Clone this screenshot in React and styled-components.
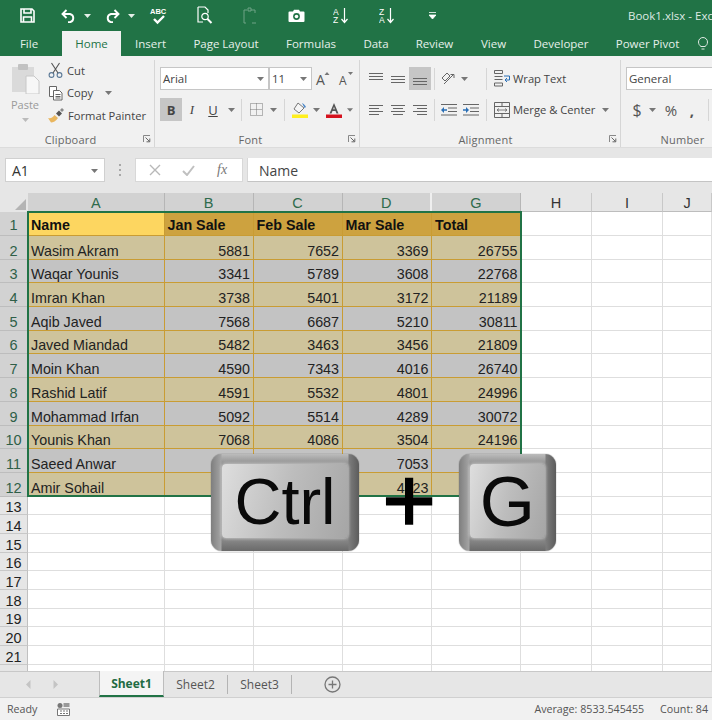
import React from "react";
import styled, { createGlobalStyle } from "styled-components";

const GlobalStyle = createGlobalStyle`
  html, body { margin: 0; padding: 0; overflow: hidden; background: #fff; }
  body { font-family: "Open Sans", "Noto Sans", sans-serif; }
  * { box-sizing: border-box; }
`;

const Page = styled.div`
  width: 712px;
  height: 720px;
  display: flex;
  flex-direction: column;
  overflow: hidden;
  position: relative;
`;

/* ---------- title bar ---------- */
const TitleBar = styled.div`
  height: 31px;
  background: #217346;
  display: flex;
  align-items: center;
  flex: none;
  color: #e4efe8;
`;
const QuickSlot = styled.div`
  width: ${(p) => p.$w}px;
  margin-left: ${(p) => p.$ml || 0}px;
  display: flex;
  justify-content: center;
  align-items: center;
  flex: none;
  opacity: ${(p) => (p.$dim ? 0.35 : 1)};
`;
const DocTitle = styled.div`
  margin-left: auto;
  width: 84px;
  white-space: nowrap;
  overflow: hidden;
  font-size: 11.5px;
  color: #dfe9e3;
`;

/* ---------- tabs ---------- */
const TabRow = styled.div`
  height: 25px;
  background: #217346;
  display: flex;
  align-items: stretch;
  flex: none;
`;
const Tab = styled.div`
  width: ${(p) => p.$w}px;
  margin-left: ${(p) => p.$ml || 0}px;
  flex: none;
  display: flex;
  align-items: center;
  justify-content: center;
  font-size: 11.5px;
  white-space: nowrap;
  color: ${(p) => (p.$active ? "#217346" : "#e6f0ea")};
  background: ${(p) => (p.$active ? "#f1f1f1" : "transparent")};
`;

/* ---------- ribbon ---------- */
const Ribbon = styled.div`
  height: 92px;
  background: #f1f1f1;
  display: flex;
  flex: none;
  border-bottom: 1px solid #dcdcdc;
`;
const Group = styled.div`
  width: ${(p) => p.$w}px;
  flex: none;
  display: flex;
  flex-direction: column;
  border-right: ${(p) => (p.$last ? "none" : "1px solid #d6d6d6")};
  margin: 4px 0 0;
`;
const GroupBody = styled.div`
  flex: 1;
  display: flex;
  min-height: 0;
`;
const GroupLabel = styled.div`
  height: 16px;
  flex: none;
  display: grid;
  grid-template-columns: 1fr auto 1fr;
  align-items: center;
  font-size: 11px;
  color: #666;
  letter-spacing: 0.2px;
  padding-right: 3px;
  & > span { grid-column: 2; transform: translateX(${(p) => p.$shift || 0}px); }
  & > svg { grid-column: 3; justify-self: end; }
`;
const PasteColumn = styled.div`
  width: 48px;
  flex: none;
  display: flex;
  flex-direction: column;
  align-items: center;
  padding-top: 4px;
  padding-left: 2px;
  font-size: 11px;
  color: #9a9a9a;
  & > span { margin-top: 4px; line-height: 14px; }
  & > svg:last-child { margin-top: 6px; }
`;
const ClipColumn = styled.div`
  display: flex;
  flex-direction: column;
  gap: 4.5px;
  padding-top: 1px;
`;
const ClipItem = styled.div`
  height: 18px;
  display: flex;
  align-items: center;
  gap: 3px;
  font-size: 11.2px;
  color: #444;
  white-space: nowrap;
`;
const ClipCaret = styled.span`
  margin-left: 9px;
  display: flex;
`;
const ToolRows = styled.div`
  display: flex;
  flex-direction: column;
  gap: 8px;
  padding-top: 7px;
  padding-left: ${(p) => p.$pad || 0}px;
`;
const ToolRow = styled.div`
  display: flex;
  align-items: center;
  height: 23px;
`;
const Combo = styled.div`
  width: ${(p) => p.$w}px;
  height: 23px;
  flex: none;
  background: #fff;
  border: 1px solid #c6c6c6;
  display: flex;
  align-items: center;
  justify-content: space-between;
  padding: 0 4px 0 2px;
  font-size: 11.5px;
  color: #444;
`;
const ToolBtn = styled.div`
  width: ${(p) => p.$w || 22}px;
  height: 23px;
  flex: none;
  display: flex;
  align-items: center;
  justify-content: center;
  color: #555;
  background: ${(p) => (p.$on ? "#c6c6c6" : "transparent")};
`;
const Sep = styled.div`
  width: 1px;
  height: 22px;
  flex: none;
  background: #d6d6d6;
  margin-left: ${(p) => p.$l || 0}px;
  margin-right: ${(p) => p.$r || 0}px;
`;
const WideLabel = styled.span`
  font-size: 11.2px;
  color: #444;
  white-space: nowrap;
  margin-left: 2px;
`;
const LetterGlyph = styled.span`
  font-size: 13px;
  font-weight: ${(p) => (p.$b ? 700 : 400)};
  font-style: ${(p) => (p.$i ? "italic" : "normal")};
  text-decoration: ${(p) => (p.$u ? "underline" : "none")};
  font-family: ${(p) => (p.$i ? '"Liberation Serif", serif' : '"Open Sans", sans-serif')};
  color: #444;
`;
const NumberGlyph = styled.span`
  font-size: ${(p) => p.$s || 15}px;
  color: #555;
  font-weight: ${(p) => p.$w || 400};
`;

/* ---------- formula bar ---------- */
const FormulaBar = styled.div`
  height: 45px;
  background: #e6e6e6;
  flex: none;
  display: flex;
  align-items: flex-start;
  padding: 10px 0 0 5px;
`;
const NameBox = styled.div`
  width: 100px;
  height: 24px;
  background: #fff;
  border: 1px solid #d0d0d0;
  display: flex;
  align-items: center;
  justify-content: space-between;
  padding: 1px 6px 0;
  font-family: "Open Sans", sans-serif;
  font-size: 14px;
  color: #333;
`;
const FormulaDots = styled.div`
  width: 30px;
  height: 24px;
  display: flex;
  align-items: center;
  justify-content: center;
`;
const FormulaBtns = styled.div`
  width: 108px;
  height: 24px;
  background: #fff;
  border: 1px solid #d8d8d8;
  display: flex;
  align-items: center;
  justify-content: space-around;
  padding: 0 4px 0 2px;
  color: #777;
  font-family: "Liberation Serif", serif;
  font-style: italic;
  font-size: 14px;
`;
const FormulaInput = styled.div`
  flex: 1;
  height: 24px;
  margin-left: 4px;
  background: #fff;
  border-bottom: 1px solid #c4c4c4;
  border-left: 1px solid #d8d8d8;
  padding: 1px 0 0 11px;
  display: flex;
  align-items: center;
  font-size: 14px;
  color: #444;
`;

/* ---------- sheet ---------- */
const COLS = "28px 136.5px 89px 89px 89.5px 89px 71px 71px 1fr";

const Sheet = styled.div`
  height: 478px;
  flex: none;
  position: relative;
  overflow: hidden;
  background: #fff;
  font-family: "Liberation Sans", sans-serif;
`;
const HeadRow = styled.div`
  display: grid;
  grid-template-columns: ${COLS};
  height: 19px;
`;
const Corner = styled.div`
  background: #e6e6e6;
  display: flex;
  align-items: flex-end;
  justify-content: flex-end;
  padding: 0 2px 2px 0;
  &::after {
    content: "";
    border-style: solid;
    border-width: 0 0 11px 11px;
    border-color: transparent transparent #b4b4b4 transparent;
  }
`;
const ColHead = styled.div`
  display: flex;
  align-items: center;
  justify-content: center;
  padding-top: 1px;
  font-size: 14.5px;
  background: ${(p) => (p.$sel ? "#d2d2d2" : "#e6e6e6")};
  color: ${(p) => (p.$sel ? "#2f6b4c" : "#333")};
  border-right: ${(p) => (p.$gap ? "2px solid #efefef" : `1px solid ${p.$sel ? "#b6b6b6" : "#c8c8c8"}`)};
  border-bottom: 1px solid ${(p) => (p.$sel ? "#217346" : "#bdbdbd")};
`;
const Row = styled.div`
  display: grid;
  grid-template-columns: ${COLS};
  height: ${(p) => p.$h}px;
`;
const RowHead = styled.div`
  display: flex;
  align-items: flex-end;
  justify-content: center;
  font-size: 14.5px;
  line-height: ${(p) => p.$lh || 15}px;
  background: ${(p) => (p.$sel ? "#d2d2d2" : "#e6e6e6")};
  color: ${(p) => (p.$sel ? "#2f5f48" : "#222")};
  border-bottom: 1px solid ${(p) => (p.$sel ? "#bdbdbd" : "#c8c8c8")};
  border-right: 1px solid #c0c0c0;
`;
const TONES = {
  title: "#fdd660",
  head: "#cda23f",
  tan: "#cec39b",
  grey: "#c3c3c3",
  blank: "#fff",
};
const Cell = styled.div`
  display: flex;
  align-items: flex-end;
  justify-content: ${(p) => (p.$num ? "flex-end" : "flex-start")};
  padding: 0 2.5px 0 3px;
  font-size: 14.3px;
  line-height: ${(p) => (p.$bold ? 20 : 15)}px;
  font-weight: ${(p) => (p.$bold ? 700 : 400)};
  color: ${(p) => (p.$bold ? "#111" : "#222")};
  white-space: nowrap;
  overflow: hidden;
  background: ${(p) => TONES[p.$tone]};
  border-right: 1px solid ${(p) => (p.$tone === "blank" ? "#dedede" : "#c99c33")};
  border-bottom: 1px solid ${(p) => (p.$tone === "blank" ? "#dedede" : "#c99c33")};
`;
const Selection = styled.div`
  position: absolute;
  left: 27px;
  top: 18px;
  width: 494.5px;
  height: 286px;
  border: 2px solid #217346;
  pointer-events: none;
`;

/* ---------- keycaps over the sheet ---------- */
const Overlay = styled.div`
  position: absolute;
  left: 211px;
  top: 454px;
  width: 345px;
  height: 97px;
  display: flex;
  align-items: center;
  justify-content: space-between;
`;
const KeyCap = styled.div`
  width: ${(p) => p.$w}px;
  height: 97px;
  border-radius: 11px;
  padding: 10px 11px 13px;
  display: flex;
  background:
    linear-gradient(90deg, #7e7e7e, #a4a4a4 10px, transparent 11px, transparent calc(100% - 11px), #7c7c7c calc(100% - 10px), #5c5c5c),
    linear-gradient(180deg, #bcbcbc, #939393 9px, #8c8c8c calc(100% - 13px), #6a6a6a);
  box-shadow: 0 0 1px #444;
`;
const KeyFace = styled.div`
  flex: 1;
  border-radius: 4px;
  background: linear-gradient(105deg, #dedede, #bdbdbd 50%, #a6a6a6);
  box-shadow: 0 0 3px 1px rgba(225, 225, 225, 0.55);
  display: flex;
  align-items: center;
  justify-content: center;
  font-family: "Liberation Sans", sans-serif;
  font-size: ${(p) => p.$size}px;
  line-height: 1;
  color: #0a0a0a;
`;
const PlusSign = styled.div`
  font-family: "Liberation Sans", sans-serif;
  font-size: 92px;
  line-height: 1;
  color: #000;
  -webkit-text-stroke: 1.6px #000;
  transform: translateY(-3px);
`;

/* ---------- sheet tabs + status ---------- */
const SheetTabs = styled.div`
  height: 27px;
  flex: none;
  background: #e6e6e6;
  border-top: 1px solid #c8c8c8;
  border-bottom: 1px solid #d0d0d0;
  display: flex;
  align-items: stretch;
  padding-left: 99px;
  position: relative;
  font-size: 12px;
  color: #555;
`;
const NavArrows = styled.div`
  position: absolute;
  left: 26px;
  top: 8px;
  display: flex;
  gap: 22px;
`;
const SheetTab = styled.div`
  width: ${(p) => p.$w}px;
  flex: none;
  display: flex;
  align-items: center;
  justify-content: center;
  background: ${(p) => (p.$active ? "#f4f4f4" : "transparent")};
  color: ${(p) => (p.$active ? "#1f6b43" : "#555")};
  font-weight: ${(p) => (p.$active ? 700 : 400)};
  margin-top: ${(p) => (p.$active ? "-1px" : "0")};
  border-bottom: ${(p) => (p.$active ? "2px solid #217346" : "none")};
  border-left: ${(p) => (p.$active ? "1px solid #bdbdbd" : "none")};
  border-right: ${(p) => (p.$active ? "1px solid #bdbdbd" : "none")};
`;
const TabDivider = styled.div`
  width: 1px;
  height: 19px;
  flex: none;
  align-self: center;
  background: #b4b4b4;
`;
const AddSheet = styled.div`
  margin-left: 32px;
  display: flex;
  align-items: center;
`;
const StatusBar = styled.div`
  height: 22px;
  flex: none;
  background: #f1f1f1;
  display: flex;
  align-items: center;
  padding: 0 4px 0 7px;
  font-size: 10.7px;
  color: #555;
  white-space: nowrap;
`;
const StatusIcon = styled.div`
  margin-left: 20px;
  display: flex;
`;
const StatusRight = styled.div`
  margin-left: auto;
  display: flex;
  gap: 16px;
`;

/* ---------- icons ---------- */
const Caret = ({ c = "#777" }) => (
  <svg width="7" height="4" viewBox="0 0 7 4"><path d="M0 0h7L3.500 4z" fill={c} /></svg>
);
const Lines = ({ rows, w = 14, h = 12 }) => (
  <svg width={w} height={h} viewBox={`0 0 ${w} ${h}`}>
    {rows.map(([x1, x2, y], i) => (
      <path key={i} d={`M${x1} ${y + 0.5}H${x2}`} stroke="#666" />
    ))}
  </svg>
);
const ALeft = [[0, 14, 1], [0, 10, 4], [0, 14, 7], [0, 10, 10]];
const ACenter = [[0, 14, 1], [2, 12, 4], [0, 14, 7], [2, 12, 10]];
const ARight = [[0, 14, 1], [4, 14, 4], [0, 14, 7], [4, 14, 10]];
const Launcher = () => (
  <svg width="8" height="8" viewBox="0 0 8 8" fill="none">
    <path d="M.5 7V.5H7" stroke="#888" />
    <path d="M2.500 2.500l4 4M3.500 6.800h3.300V3.500" stroke="#666" />
  </svg>
);
const Save = () => (
  <svg width="15" height="15" viewBox="0 0 15 15" fill="none" stroke="#fff" strokeWidth="1.600">
    <path d="M1 1h11l2 2v11H1z" />
    <path d="M4 1v4h7V1M3.500 14V9h8v5" />
  </svg>
);
const Undo = () => (
  <svg width="15" height="14" viewBox="0 0 15 14" fill="none" stroke="#fff" strokeWidth="1.900">
    <path d="M5.500 1L1.500 5l4 4" />
    <path d="M2 5h7a4.200 4.200 0 0 1 0 8.200H7" />
  </svg>
);
const Redo = () => (
  <svg width="15" height="14" viewBox="0 0 15 14" fill="none" stroke="#fff" strokeWidth="1.900">
    <path d="M9.500 1l4 4-4 4" />
    <path d="M13 5H6a4.200 4.200 0 0 0 0 8.200h2" />
  </svg>
);
const Spell = () => (
  <svg width="20" height="20" viewBox="0 0 20 20">
    <text x="1" y="8" fontSize="7.500" fontWeight="700" fontFamily="Liberation Sans" fill="#fff">ABC</text>
    <path d="M5 13l3.500 3.500L15 10" fill="none" stroke="#fff" strokeWidth="2.400" />
  </svg>
);
const Preview = () => (
  <svg width="16" height="19" viewBox="0 0 16 19" fill="none" stroke="#fff" strokeWidth="1.200">
    <path d="M1 1h7l3 3v3M1 1v15h5" />
    <circle cx="8" cy="10.500" r="3.200" />
    <path d="M10.500 13l4 4" strokeWidth="2" />
  </svg>
);
const PageSetup = () => (
  <svg width="15" height="18" viewBox="0 0 15 18" fill="none" stroke="#fff">
    <path d="M1 3h3M8 3h4v3M1 3v13h2M9 16h4" />
    <path d="M5 1h3v3H5z" />
  </svg>
);
const CameraIcon = () => (
  <svg width="17" height="13" viewBox="0 0 17 13">
    <path d="M1.500 2.500H5L6 .8h5l1 1.700h3.500a1 1 0 0 1 1 1V12a1 1 0 0 1-1 1h-14a1 1 0 0 1-1-1V3.500a1 1 0 0 1 1-1z" fill="#fff" />
    <circle cx="8.500" cy="7.500" r="3.400" fill="#217346" />
    <circle cx="8.500" cy="7.500" r="1.800" fill="#fff" />
  </svg>
);
const Sort = ({ top, bottom }) => (
  <svg width="16" height="17" viewBox="0 0 16 17">
    <text x="0" y="7.500" fontSize="8.500" fontFamily="Liberation Sans" fill="#fff">{top}</text>
    <text x="0" y="16" fontSize="8.500" fontFamily="Liberation Sans" fill="#fff">{bottom}</text>
    <path d="M11.500 1v14M8.500 12l3 3.500 3-3.500" fill="none" stroke="#fff" strokeWidth="1.200" />
  </svg>
);
const More = () => (
  <svg width="7" height="7" viewBox="0 0 7 7"><path d="M0 .5h7M0 3h7L3.500 7z" stroke="#fff" fill="#fff" strokeWidth=".8" /></svg>
);
const Bulb = () => (
  <svg width="10" height="14" viewBox="0 0 10 14" fill="none" stroke="#dfe9e3">
    <path d="M3 9.500C1.500 8.500.5 7 .5 5a4.500 4.500 0 0 1 9 0c0 2-1 3.500-2.500 4.500zM3.500 12h3" />
  </svg>
);
const PasteIcon = () => (
  <svg width="29" height="30" viewBox="0 0 29 30">
    <rect x="1" y="3" width="22" height="25" fill="#dadada" />
    <rect x="7" y="0" width="10" height="6" rx="1" fill="#c2c2c2" />
    <path d="M15 12h8l5 5v13H15z" fill="#f7f7f7" stroke="#c8c8c8" />
  </svg>
);
const Cut = () => (
  <svg width="16" height="16" viewBox="0 0 16 16" fill="none" stroke="#5a7896" strokeWidth="1.100">
    <circle cx="3.500" cy="13" r="2.400" />
    <circle cx="11.500" cy="13" r="2.400" />
    <path d="M5 11L11.500 1M10 11L3.500 1" stroke="#555" />
  </svg>
);
const CopyIcon = () => (
  <svg width="16" height="16" viewBox="0 0 16 16" fill="#fff" stroke="#666">
    <path d="M1.500 1.500h7v10h-7z" />
    <path d="M5.500 5.500h6l2.500 2.500v7h-8.500z" />
    <path d="M7.500 9.500h5M7.500 11.500h5M7.500 13h5" />
  </svg>
);
const Painter = () => (
  <svg width="17" height="15" viewBox="0 0 17 15">
    <path d="M0 10c3 1 5-1 6.500-3L10 10c-2 3-5 4.500-7 4.500z" fill="#e9b65e" />
    <path d="M8 5.500l3-3 3 3-3 3z" fill="#555" />
    <path d="M12 2l2-2 2 2-2 2z" fill="#8a8a8a" />
  </svg>
);
const BigA = ({ size, up }) => (
  <svg width="15" height="15" viewBox="0 0 15 15" overflow="visible">
    <text x="0" y="14" fontSize={size} fontFamily="Open Sans" fill="#555">A</text>
    <path d={up ? "M8.500 4l2.500-3 2.500 3z" : "M9 1h5l-2.500 3z"} fill="#777" />
  </svg>
);
const Borders = () => (
  <svg width="13" height="13" viewBox="0 0 13 13" fill="none" stroke="#777" strokeDasharray="1 1">
    <path d="M.5.500h12v12H.5zM6.500 .5v12M.5 6.500h12" />
  </svg>
);
const Fill = () => (
  <svg width="16" height="16" viewBox="0 0 16 16">
    <path d="M6 1l6 5-5 5-5-4z" fill="#f6f6f6" stroke="#777" />
    <path d="M10 1c2 1 3 2 4 4l-1.500 1z" fill="#4a86c8" />
    <rect x="0" y="12.500" width="16" height="3.500" fill="#ffef1e" />
  </svg>
);
const FontColor = () => (
  <svg width="16" height="16" viewBox="0 0 16 16">
    <path d="M8 1L3.500 11.500h2L6.500 9h3l1 2.500h2zM7.200 7.300L8 4.800l.8 2.500z" fill="#555" />
    <rect x="0" y="12.500" width="16" height="3.500" fill="#d5121e" />
  </svg>
);
const Orient = () => (
  <svg width="16" height="14" viewBox="0 0 16 14" fill="none" stroke="#666">
    <path d="M1 6l5-5 3 3-5 5zM3 12l9-9M9.500 2.500H13V6" />
  </svg>
);
const Indent = ({ flip }) => (
  <svg width="16" height="12" viewBox="0 0 16 12">
    {[0.5, 4, 7.5, 11].map((y, i) => (
      <path key={i} d={`M${i === 1 || i === 2 ? 7 : 0} ${y}H16`} stroke="#666" />
    ))}
    <path
      d={flip ? "M0 5.200h3V3l3 3-3 3V6.800H0z" : "M6 5.200H3V3L0 6l3 3V6.800h3z"}
      fill="#2a6fb5"
    />
  </svg>
);
const WrapIcon = () => (
  <svg width="17" height="17" viewBox="0 0 17 17" fill="none" stroke="#666">
    <path d="M.5.500h8v3h-8zM.5 6.500h8M.5 9.500h8M.5 13h8v3h-8z" />
    <path d="M10 6h5.500v4H11.500M13 8l-2 2 2 2" stroke="#2a6fb5" />
  </svg>
);
const MergeIcon = () => (
  <svg width="17" height="16" viewBox="0 0 17 16" fill="none" stroke="#666">
    <path d="M.5.500h15v15H.5zM.5 4.500h15M.5 11.500h15M8 .5v4M8 11.500v4" />
    <path d="M3 8h10M5 6.500L3 8l2 1.500M11 6.500L13 8l-2 1.500" strokeWidth=".8" />
  </svg>
);
const Cross = () => (
  <svg width="12" height="12" viewBox="0 0 12 12"><path d="M1 1l10 10M11 1L1 11" stroke="#b8b8b8" strokeWidth="1.400" /></svg>
);
const Check = () => (
  <svg width="13" height="11" viewBox="0 0 13 11"><path d="M1 6l4 4 7-9" fill="none" stroke="#c0c0c0" strokeWidth="2" /></svg>
);
const Dots = () => (
  <svg width="3" height="12" viewBox="0 0 3 12" fill="#a8a8a8">
    <rect y="0" x="0" width="2" height="2" /><rect y="5" x="0" width="2" height="2" /><rect y="10" x="0" width="2" height="2" />
  </svg>
);
const NavLeft = () => (<svg width="5" height="9" viewBox="0 0 5 9"><path d="M4.500 0v9L0 4.500z" fill="#c4c4c4" /></svg>);
const NavRight = () => (<svg width="5" height="9" viewBox="0 0 5 9"><path d="M.5 0v9L5 4.500z" fill="#c4c4c4" /></svg>);
const PlusCircle = () => (
  <svg width="17" height="17" viewBox="0 0 17 17" fill="none" stroke="#777" strokeWidth="1.300">
    <circle cx="8.500" cy="8.500" r="7.500" />
    <path d="M8.500 4.500v8M4.500 8.500h8" />
  </svg>
);
const MacroIcon = () => (
  <svg width="13" height="13" viewBox="0 0 13 13">
    <circle cx="3" cy="2.500" r="2.500" fill="#777" />
    <path d="M.5 6h12v6.500H.5z" fill="#fff" stroke="#777" />
    <path d="M6.500 0h6v4h-6z" fill="#999" />
    <path d="M3 8h2M6 8h2M9 8h2M3 10.500h2M6 10.500h2M9 10.500h2" stroke="#777" />
  </svg>
);

/* ---------- data ---------- */
const PEOPLE = [
  ["Wasim Akram", 5881, 7652, 3369, 26755],
  ["Waqar Younis", 3341, 5789, 3608, 22768],
  ["Imran Khan", 3738, 5401, 3172, 21189],
  ["Aqib Javed", 7568, 6687, 5210, 30811],
  ["Javed Miandad", 5482, 3463, 3456, 21809],
  ["Moin Khan", 4590, 7343, 4016, 26740],
  ["Rashid Latif", 4591, 5532, 4801, 24996],
  ["Mohammad Irfan", 5092, 5514, 4289, 30072],
  ["Younis Khan", 7068, 4086, 3504, 24196],
  ["Saeed Anwar", null, null, 7053, null],
  ["Amir Sohail", null, null, 4423, null],
];
const SEL_COLS = ["A", "B", "C", "D", "G"];
const BLANK_ROWS = [13, 14, 15, 16, 17, 18, 19, 20, 21];
const BLANK_CELLS = [0, 1, 2, 3, 4, 5, 6, 7];

export default function App() {
  return (
    <Page>
      <GlobalStyle />
      <TitleBar>
        <QuickSlot $w={54}><Save /></QuickSlot>
        <QuickSlot $w={28}><Undo /></QuickSlot>
        <QuickSlot $w={10}><Caret c="#e4efe8" /></QuickSlot>
        <QuickSlot $w={27} $ml={7}><Redo /></QuickSlot>
        <QuickSlot $w={10}><Caret c="#e4efe8" /></QuickSlot>
        <QuickSlot $w={46}><Spell /></QuickSlot>
        <QuickSlot $w={46}><Preview /></QuickSlot>
        <QuickSlot $w={44} $dim><PageSetup /></QuickSlot>
        <QuickSlot $w={48}><CameraIcon /></QuickSlot>
        <QuickSlot $w={42}><Sort top="A" bottom="Z" /></QuickSlot>
        <QuickSlot $w={50}><Sort top="Z" bottom="A" /></QuickSlot>
        <QuickSlot $w={40}><More /></QuickSlot>
        <DocTitle>Book1.xlsx - Excel</DocTitle>
      </TitleBar>

      <TabRow>
        <Tab $w={58}>File</Tab>
        <Tab $w={59} $ml={4} $active>Home</Tab>
        <Tab $w={59}>Insert</Tab>
        <Tab $w={92}>Page Layout</Tab>
        <Tab $w={78}>Formulas</Tab>
        <Tab $w={52}>Data</Tab>
        <Tab $w={65}>Review</Tab>
        <Tab $w={53}>View</Tab>
        <Tab $w={82}>Developer</Tab>
        <Tab $w={91}>Power Pivot</Tab>
        <Tab $w={19}><Bulb /></Tab>
      </TabRow>

      <Ribbon>
        <Group $w={155}>
          <GroupBody>
            <PasteColumn>
              <PasteIcon />
              <span>Paste</span>
              <Caret c="#bbb" />
            </PasteColumn>
            <ClipColumn>
              <ClipItem><Cut />Cut</ClipItem>
              <ClipItem><CopyIcon />Copy<ClipCaret><Caret /></ClipCaret></ClipItem>
              <ClipItem><Painter />Format Painter</ClipItem>
            </ClipColumn>
          </GroupBody>
          <GroupLabel $shift={-5}><span>Clipboard</span><Launcher /></GroupLabel>
        </Group>

        <Group $w={205}>
          <GroupBody>
            <ToolRows $pad={5}>
              <ToolRow>
                <Combo $w={109}>Arial<Caret /></Combo>
                <Combo $w={43}>11<Caret /></Combo>
                <ToolBtn $w={23}><BigA size={14} up /></ToolBtn>
                <ToolBtn $w={23}><BigA size={12} /></ToolBtn>
              </ToolRow>
              <ToolRow>
                <ToolBtn $on><LetterGlyph $b>B</LetterGlyph></ToolBtn>
                <ToolBtn $w={20}><LetterGlyph $i>I</LetterGlyph></ToolBtn>
                <ToolBtn $w={22}><LetterGlyph $u>U</LetterGlyph></ToolBtn>
                <ToolBtn $w={14}><Caret /></ToolBtn>
                <Sep $l={3} $r={3} />
                <ToolBtn><Borders /></ToolBtn>
                <ToolBtn $w={12}><Caret /></ToolBtn>
                <Sep $l={5} $r={4} />
                <ToolBtn><Fill /></ToolBtn>
                <ToolBtn $w={10}><Caret /></ToolBtn>
                <ToolBtn $w={26}><FontColor /></ToolBtn>
                <ToolBtn $w={6}><Caret /></ToolBtn>
              </ToolRow>
            </ToolRows>
          </GroupBody>
          <GroupLabel $shift={-5}><span>Font</span><Launcher /></GroupLabel>
        </Group>

        <Group $w={261}>
          <GroupBody>
            <ToolRows $pad={5}>
              <ToolRow>
                <ToolBtn><Lines rows={[[0, 14, 0], [0, 14, 3], [0, 14, 6]]} /></ToolBtn>
                <ToolBtn><Lines rows={[[0, 14, 3], [0, 14, 6], [0, 14, 9]]} /></ToolBtn>
                <ToolBtn $on><Lines rows={[[0, 14, 5], [0, 14, 8], [0, 14, 11]]} /></ToolBtn>
                <Sep $l={3} $r={3} />
                <ToolBtn><Orient /></ToolBtn>
                <ToolBtn $w={8}><Caret /></ToolBtn>
                <Sep $l={18} $r={6} />
                <ToolBtn $w={18}><WrapIcon /></ToolBtn>
                <WideLabel>Wrap Text</WideLabel>
              </ToolRow>
              <ToolRow>
                <ToolBtn><Lines rows={ALeft} /></ToolBtn>
                <ToolBtn><Lines rows={ACenter} /></ToolBtn>
                <ToolBtn><Lines rows={ARight} /></ToolBtn>
                <Sep $l={3} $r={3} />
                <ToolBtn><Indent /></ToolBtn>
                <ToolBtn><Indent flip /></ToolBtn>
                <Sep $l={4} $r={6} />
                <ToolBtn $w={18}><MergeIcon /></ToolBtn>
                <WideLabel>Merge &amp; Center</WideLabel>
                <ToolBtn $w={20}><Caret /></ToolBtn>
              </ToolRow>
            </ToolRows>
          </GroupBody>
          <GroupLabel $shift={-3}><span>Alignment</span><Launcher /></GroupLabel>
        </Group>

        <Group $w={120} $last>
          <GroupBody>
            <ToolRows $pad={5}>
              <ToolRow><Combo $w={110}>General</Combo></ToolRow>
              <ToolRow>
                <ToolBtn><NumberGlyph $s={16}>$</NumberGlyph></ToolBtn>
                <ToolBtn $w={8}><Caret /></ToolBtn>
                <ToolBtn $w={30}><NumberGlyph $s={15}>%</NumberGlyph></ToolBtn>
                <ToolBtn $w={12}><NumberGlyph $s={15} $w={700}>,</NumberGlyph></ToolBtn>
                <Sep $l={10} />
              </ToolRow>
            </ToolRows>
          </GroupBody>
          <GroupLabel $shift={3}><span>Number</span></GroupLabel>
        </Group>
      </Ribbon>

      <FormulaBar>
        <NameBox>A1<Caret c="#777" /></NameBox>
        <FormulaDots><Dots /></FormulaDots>
        <FormulaBtns><Cross /><Check /><span>fx</span></FormulaBtns>
        <FormulaInput>Name</FormulaInput>
      </FormulaBar>

      <Sheet>
        <HeadRow>
          <Corner />
          {SEL_COLS.map((c) => <ColHead key={c} $sel $gap={c === "D"}>{c}</ColHead>)}
          {["H", "I", "J"].map((c) => <ColHead key={c}>{c}</ColHead>)}
        </HeadRow>

        <Row $h={24}>
          <RowHead $sel $lh={20}>1</RowHead>
          <Cell $tone="title" $bold>Name</Cell>
          <Cell $tone="head" $bold>Jan Sale</Cell>
          <Cell $tone="head" $bold>Feb Sale</Cell>
          <Cell $tone="head" $bold>Mar Sale</Cell>
          <Cell $tone="head" $bold>Total</Cell>
          <Cell $tone="blank" />
          <Cell $tone="blank" />
          <Cell $tone="blank" />
        </Row>

        {PEOPLE.map(([name, b, c, d, g], i) => {
          const tone = i % 2 === 0 ? "tan" : "grey";
          return (
            <Row key={name} $h={23.7}>
              <RowHead $sel>{i + 2}</RowHead>
              <Cell $tone={tone}>{name}</Cell>
              <Cell $tone={tone} $num>{b}</Cell>
              <Cell $tone={tone} $num>{c}</Cell>
              <Cell $tone={tone} $num>{d}</Cell>
              <Cell $tone={tone} $num>{g}</Cell>
              <Cell $tone="blank" />
              <Cell $tone="blank" />
              <Cell $tone="blank" />
            </Row>
          );
        })}

        {BLANK_ROWS.map((n) => (
          <Row key={n} $h={18.7}>
            <RowHead $lh={14}>{n}</RowHead>
            {BLANK_CELLS.map((k) => <Cell key={k} $tone="blank" />)}
          </Row>
        ))}
        <Row $h={18.7}>
          <RowHead />
          {BLANK_CELLS.map((k) => <Cell key={k} $tone="blank" />)}
        </Row>

        <Selection />
      </Sheet>

      <SheetTabs>
        <NavArrows><NavLeft /><NavRight /></NavArrows>
        <SheetTab $w={65} $active>Sheet1</SheetTab>
        <SheetTab $w={63}>Sheet2</SheetTab>
        <TabDivider />
        <SheetTab $w={63}>Sheet3</SheetTab>
        <TabDivider />
        <AddSheet><PlusCircle /></AddSheet>
      </SheetTabs>

      <StatusBar>
        Ready
        <StatusIcon><MacroIcon /></StatusIcon>
        <StatusRight>
          <span>Average: 8533.545455</span>
          <span>Count: 84</span>
        </StatusRight>
      </StatusBar>

      <Overlay>
        <KeyCap $w={148}><KeyFace $size={65}>Ctrl</KeyFace></KeyCap>
        <PlusSign>+</PlusSign>
        <KeyCap $w={97}><KeyFace $size={71}>G</KeyFace></KeyCap>
      </Overlay>
    </Page>
  );
}
